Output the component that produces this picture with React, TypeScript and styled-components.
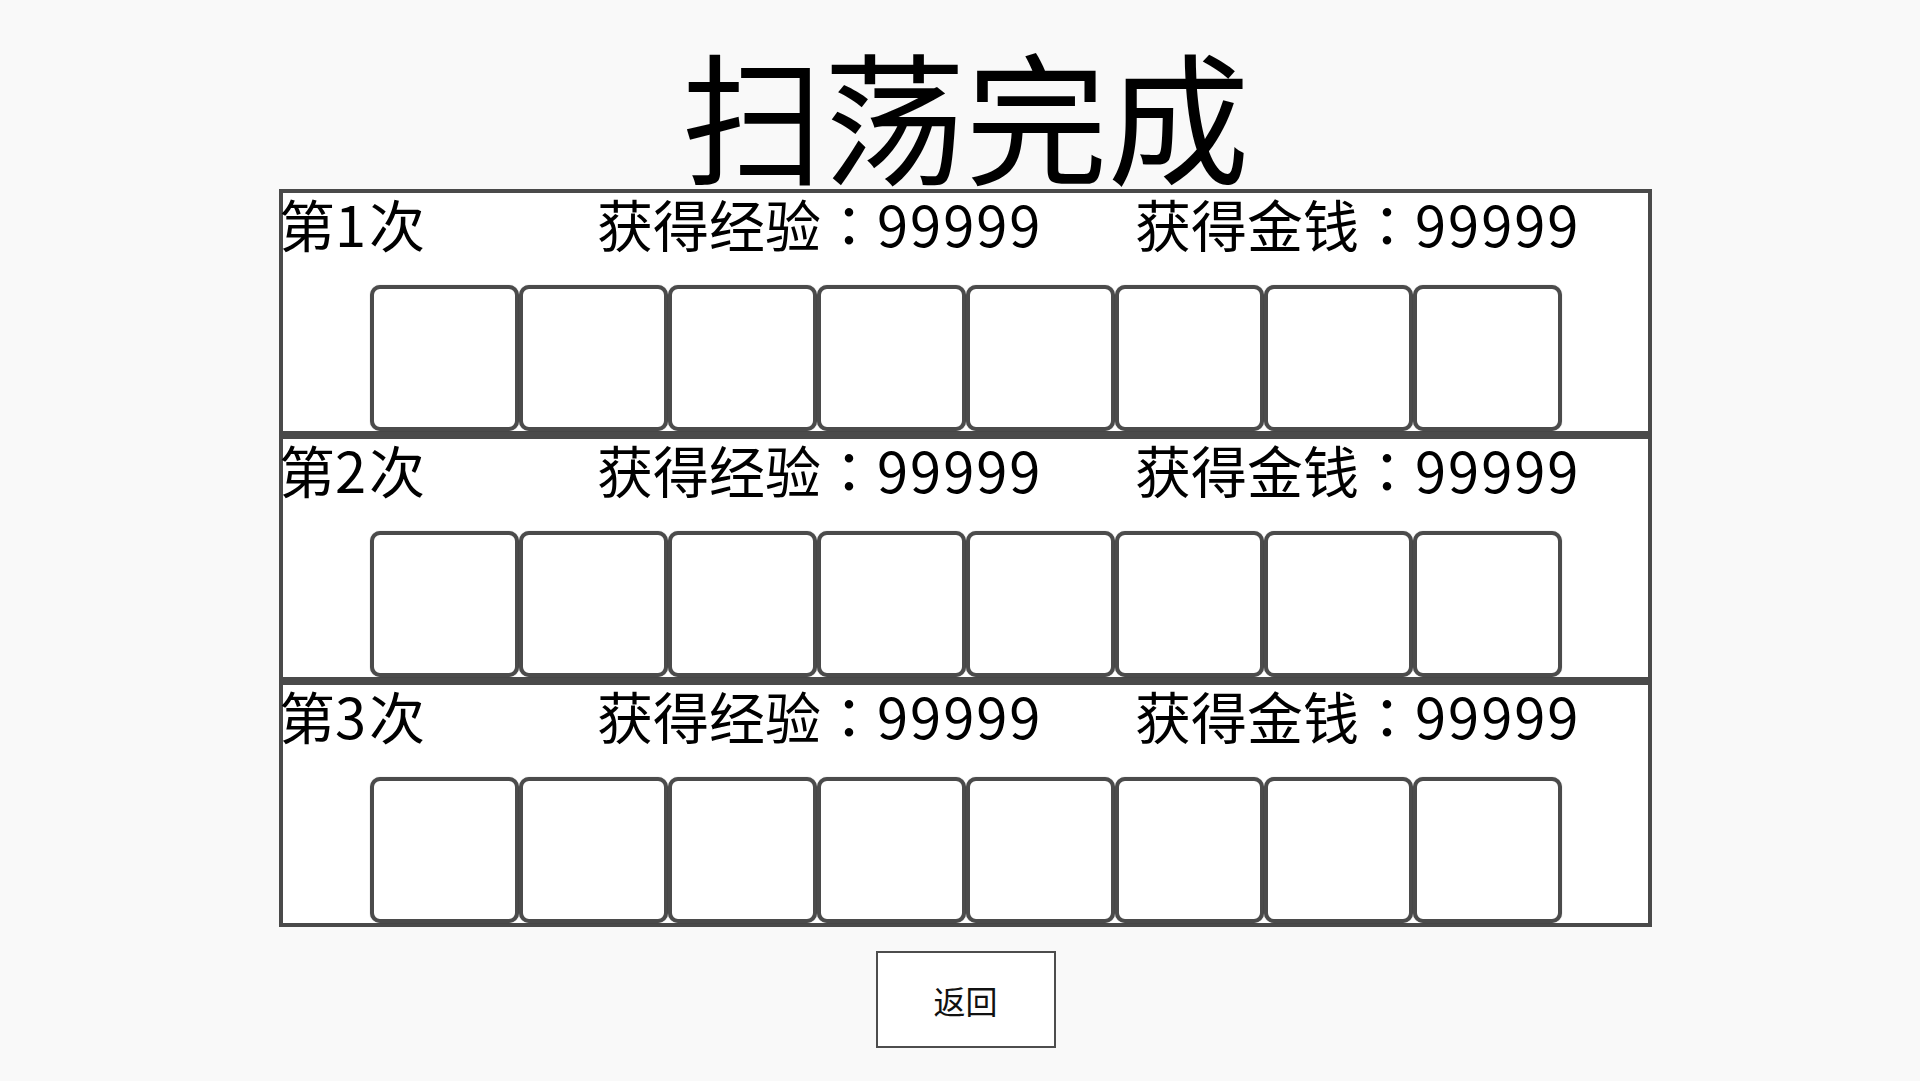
import React from "react";
import styled, { createGlobalStyle } from "styled-components";

const GlobalStyle = createGlobalStyle`
  html, body {
    margin: 0;
    padding: 0;
    background: #f9f9f9;
  }
  body {
    font-family: "Noto Sans CJK SC", "Noto Sans", sans-serif;
    color: #000;
  }
`;

const Page = styled.div`
  min-height: 1081px;
  display: flex;
  flex-direction: column;
  align-items: center;
  padding-left: 11px;
  box-sizing: border-box;
`;

const Title = styled.h1`
  margin: 41px 0 0;
  font-size: 142px;
  font-weight: 400;
  line-height: 142px;
  height: 148px;
  letter-spacing: 0;
  position: relative;
  z-index: 0;
`;

const Panel = styled.div`
  width: 1373px;
  display: flex;
  flex-direction: column;
  position: relative;
  z-index: 1;
`;

const Round = styled.section`
  height: 246px;
  box-sizing: border-box;
  border: 4px solid #4a4a4a;
  background: #fff;
  display: flex;
  flex-direction: column;
`;

const Header = styled.div`
  height: 92px;
  margin-left: -4px;
  display: grid;
  grid-template-columns: 318px 538px auto;
  align-items: start;
  font-size: 56px;
  line-height: 56px;
  padding-top: 2px;
  box-sizing: border-box;
  white-space: nowrap;
`;

const Label = styled.span`
  display: block;
`;

const Colon = styled.span`
  font-family: "Noto Sans CJK TC", "Noto Sans CJK SC", sans-serif;
`;

const Num = styled.span<{ $spacing?: number }>`
  letter-spacing: ${(p) => p.$spacing ?? 2}px;
`;

const Slots = styled.div`
  display: flex;
  justify-content: center;
  flex: 1;
`;

const Slot = styled.div`
  width: 149px;
  height: 146px;
  box-sizing: border-box;
  border: 4px solid #4b4b4b;
  border-radius: 10px;
  background: #fff;
  box-shadow: 0 0 1px rgba(0, 0, 0, 0.45);
`;

const BackButton = styled.button`
  margin-top: 24px;
  width: 180px;
  height: 97px;
  background: #fff;
  border: 2px solid #4d4d4d;
  font-family: "Noto Sans CJK SC", sans-serif;
  font-size: 32px;
  color: #111;
  padding: 0;
  cursor: pointer;
  display: flex;
  align-items: center;
  justify-content: center;
`;

const rounds = [1, 2, 3];
const slotCount = 8;

export default function App() {
  return (
    <>
      <GlobalStyle />
      <Page>
        <Title>扫荡完成</Title>
        <Panel>
          {rounds.map((r) => (
            <Round key={r}>
              <Header>
                <Label>
                  第<Num $spacing={3}>{r}</Num>次
                </Label>
                <Label>
                  获得经验<Colon>：</Colon>
                  <Num>99999</Num>
                </Label>
                <Label>
                  获得金钱<Colon>：</Colon>
                  <Num>99999</Num>
                </Label>
              </Header>
              <Slots>
                {Array.from({ length: slotCount }).map((_, i) => (
                  <Slot key={i} />
                ))}
              </Slots>
            </Round>
          ))}
        </Panel>
        <BackButton>返回</BackButton>
      </Page>
    </>
  );
}
